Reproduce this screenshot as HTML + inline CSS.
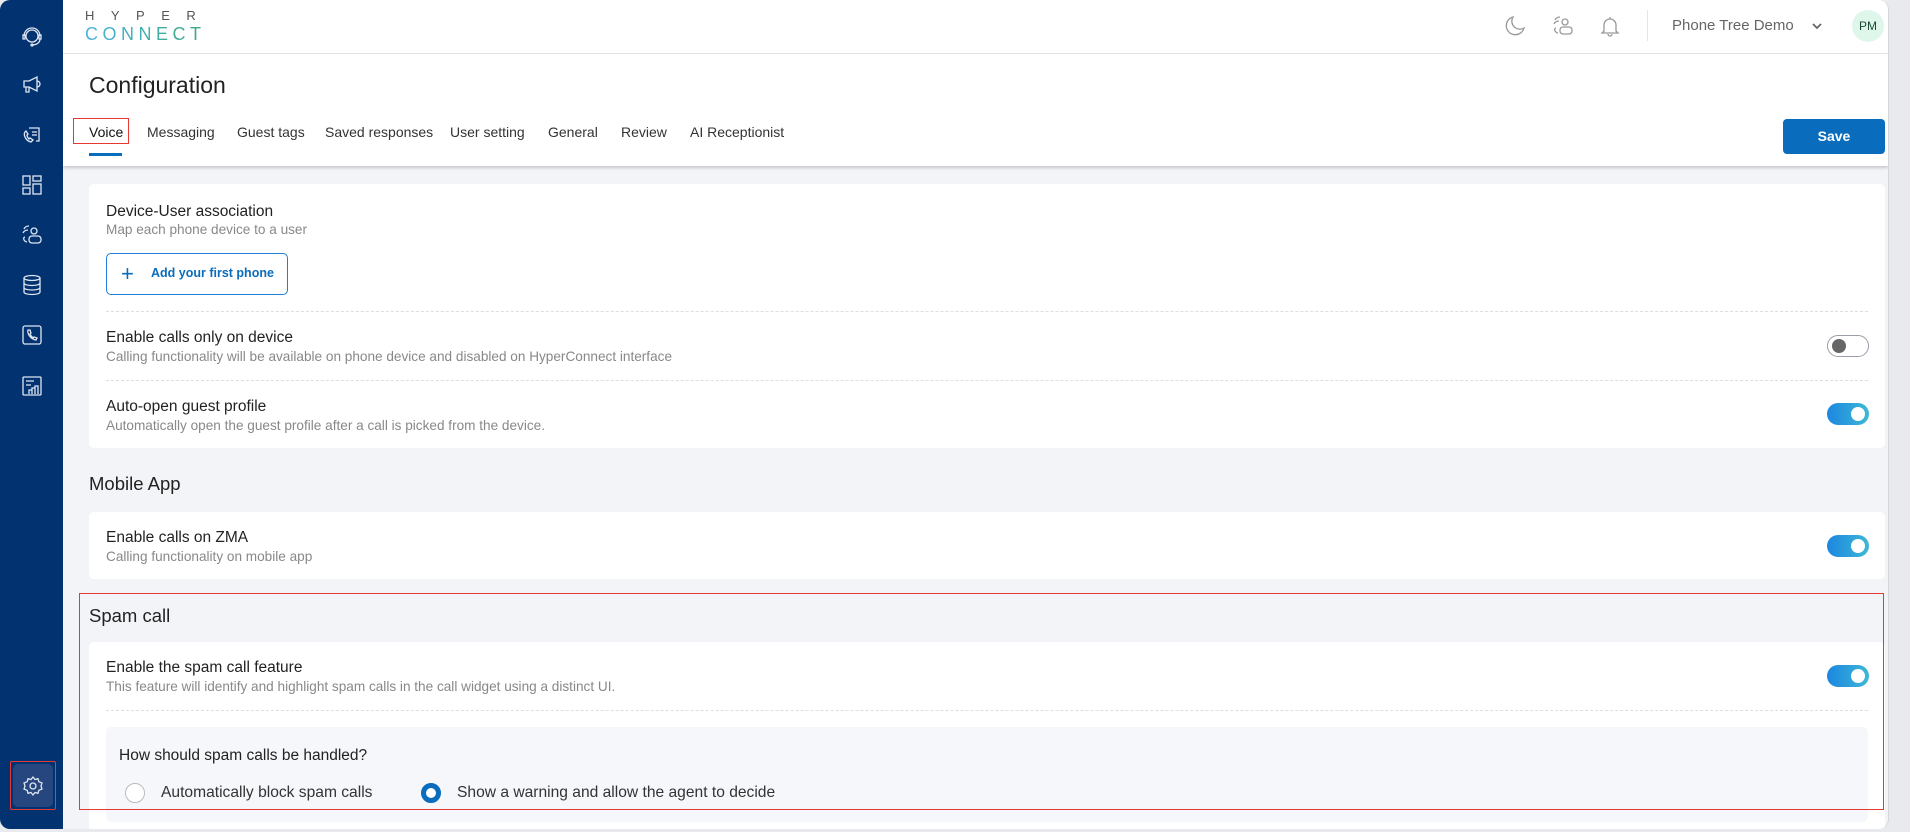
<!DOCTYPE html>
<html><head><meta charset="utf-8"><style>
*{box-sizing:border-box;margin:0;padding:0}
body{width:1910px;height:832px;overflow:hidden;background:#e9eaee;font-family:"Liberation Sans",sans-serif;position:relative}
.sb{position:absolute;left:0;top:0;width:63px;height:829px;background:#033270;border-radius:10px 0 0 10px}
.sb svg{position:absolute;left:20px;width:24px;height:24px;fill:none;stroke:#dfe6f2;stroke-width:1.3}
.page{position:absolute;left:63px;top:0;width:1826px;height:829px;background:#f3f4f8;border-right:1px solid #d4d6dc;border-radius:0 10px 10px 0;overflow:hidden}
.hdr{position:absolute;left:0;top:0;width:100%;height:54px;background:#fff;border-bottom:1px solid #e3e5ea}
.top{position:absolute;left:0;top:54px;width:100%;height:112px;background:#fff;box-shadow:0 2px 3px rgba(0,0,0,.18)}
.a{position:absolute;white-space:nowrap}
.card{position:absolute;left:26px;width:1796px;background:#fff;border-radius:5px}
.t{font-size:15.5px;color:#222}
.s{font-size:13.6px;color:#888}
.dash{position:absolute;left:17px;right:17px;border-top:1.5px dashed #dcdee3}
.tg{position:absolute;width:42px;height:22px;border-radius:11px;background:linear-gradient(90deg,#1c86e0,#3db9d5)}
.tg::after{content:"";position:absolute;right:4px;top:4px;width:14px;height:14px;border-radius:50%;background:#fff}
.off{background:#fff;border:1.5px solid #9a9ea8}
.off::after{left:4px;right:auto;top:3px;background:#666}
.tab{font-size:14px;color:#333;top:124px}
</style></head><body>
<div class="sb">
<svg style="top:25px" viewBox="0 0 24 24"><circle cx="12" cy="11" r="6"/><path d="M4 11a8 8 0 0116 0M3 10h2v4H3zM19 10h2v4h-2zM20 14c0 4-4 6-8 6"/><circle cx="12" cy="20" r="1"/><path d="M9.5 11h.1M12 11h.1M14.5 11h.1"/></svg>
<svg style="top:73px" viewBox="0 0 24 24"><path d="M4 8h5l8-4v14l-8-4H4zM6 14v5h3v-5M17 8a3 3 0 010 6"/></svg>
<svg style="top:123px" viewBox="0 0 24 24"><path d="M9 5h10v13h-3M12 9h5M12 12h5M5 9c-2 3 1 9 6 10l2-2-3-2-1 1c-1-1-2-2-2-4l1-1-2-3z"/></svg>
<svg style="top:173px" viewBox="0 0 24 24"><rect x="3" y="3" width="7" height="9"/><rect x="13" y="3" width="8" height="5"/><rect x="3" y="15" width="7" height="6"/><rect x="13" y="11" width="8" height="10"/></svg>
<svg style="top:223px" viewBox="0 0 24 24"><circle cx="14" cy="8" r="3"/><rect x="9" y="13" width="12" height="7" rx="3"/><path d="M4 6c1-2 3-3 5-3M3 10c1-2 3-3 5-3M5 14c-2 0-2 4 2 5"/></svg>
<svg style="top:273px" viewBox="0 0 24 24"><ellipse cx="12" cy="5" rx="8" ry="2.5"/><path d="M4 5v14c0 1.5 3.5 2.5 8 2.5s8-1 8-2.5V5M4 10c0 1.5 3.5 2.5 8 2.5s8-1 8-2.5M4 14.5c0 1.5 3.5 2.5 8 2.5s8-1 8-2.5"/></svg>
<svg style="top:323px" viewBox="0 0 24 24"><rect x="3" y="3" width="18" height="18" rx="2"/><path d="M8 7c-1 3 2 9 8 10l1-2-3-1-1 1c-1-1-2-2-3-4l1-1-1-3z"/></svg>
<svg style="top:374px" viewBox="0 0 24 24"><rect x="3" y="3" width="18" height="18" rx="1"/><path d="M6 7h8M6 11h5M9 20v-4h3v4M12 20v-6h3v6M15 20v-8h3v8"/></svg>
<div style="position:absolute;left:10px;top:761px;width:46px;height:49px;border:1.5px solid #e53935;border-radius:2px"><div style="position:absolute;left:2px;top:2px;right:2px;bottom:2px;background:#25467e;border-radius:5px"></div>
<svg style="top:12px;left:10px" viewBox="0 0 24 24"><circle cx="12" cy="12" r="3"/><path d="M12 3l2 2.5 3-.8.8 3L21 9l-1 3 1 3-3.2 1.3-.8 3-3-.8L12 21l-2-2.5-3 .8-.8-3L3 15l1-3-1-3 3.2-1.3.8-3 3 .8z"/></svg></div>
</div>
<div class="page">
<div class="hdr">
<div class="a" style="left:22px;top:8px;font-size:13px;letter-spacing:16.5px;color:#555">HYPER</div>
<div class="a" style="left:22px;top:24px;font-size:18px;letter-spacing:4.5px;background:linear-gradient(90deg,#4ab3e0,#3aa87a);-webkit-background-clip:text;color:transparent">CONNECT</div>
<svg class="a" style="left:1440px;top:14px" width="24" height="24" viewBox="0 0 24 24" fill="none" stroke="#999" stroke-width="1.3"><path d="M10 3a9 9 0 1011 11A8 8 0 0110 3z"/></svg>
<svg class="a" style="left:1488px;top:14px" width="24" height="24" viewBox="0 0 24 24" fill="none" stroke="#999" stroke-width="1.3"><circle cx="14" cy="8" r="3"/><rect x="9" y="13" width="12" height="7" rx="3"/><path d="M4 6c1-2 3-3 5-3M3 10c1-2 3-3 5-3M5 14c-2 0-2 4 2 5"/></svg>
<svg class="a" style="left:1535px;top:14px" width="24" height="24" viewBox="0 0 24 24" fill="none" stroke="#999" stroke-width="1.3"><path d="M6 17V11a6 6 0 0112 0v6l2 2H4zM10 20a2 2 0 004 0M12 3v2"/></svg>
<div class="a" style="left:1584px;top:10px;width:1px;height:31px;background:#e3e5ea"></div>
<div class="a" style="left:1609px;top:17px;font-size:15px;color:#666">Phone Tree Demo</div>
<svg class="a" style="left:1748px;top:20px" width="12" height="12" viewBox="0 0 12 12" fill="none" stroke="#666" stroke-width="1.8"><path d="M2 4l4 4 4-4"/></svg>
<div class="a" style="left:1789px;top:10px;width:32px;height:32px;border-radius:50%;background:#dff6ea;color:#1a4a33;font-size:12px;text-align:center;line-height:32px">PM</div>
</div>
<div class="top">
<div class="a" style="left:26px;top:18px;font-size:23px;color:#222">Configuration</div>
<div class="a" style="left:10px;top:64px;width:56px;height:26px;border:1.5px solid #e53935"></div>
<div class="a tab" style="left:26px;top:70px;color:#111">Voice</div>
<div class="a" style="left:26px;top:99px;width:33px;height:3px;background:#0a6cbd"></div>
<div class="a tab" style="left:84px;top:70px">Messaging</div>
<div class="a tab" style="left:174px;top:70px">Guest tags</div>
<div class="a tab" style="left:262px;top:70px">Saved responses</div>
<div class="a tab" style="left:387px;top:70px">User setting</div>
<div class="a tab" style="left:485px;top:70px">General</div>
<div class="a tab" style="left:558px;top:70px">Review</div>
<div class="a tab" style="left:627px;top:70px">AI Receptionist</div>
<div class="a" style="left:1720px;top:65px;width:102px;height:35px;background:#0a6cbd;border-radius:4px;color:#fff;font-weight:bold;font-size:14px;text-align:center;line-height:35px">Save</div>
</div>
<div class="card" style="top:184px;height:264px">
<div class="a t" style="left:17px;top:19px">Device-User association</div>
<div class="a s" style="left:17px;top:38px">Map each phone device to a user</div>
<div class="a" style="left:17px;top:69px;width:182px;height:42px;border:1.5px solid #1f7fd6;border-radius:5px;color:#0a6cbd;font-size:12.5px;font-weight:bold;line-height:39px;padding-left:44px">Add your first phone<span style="position:absolute;left:14px;top:0;font-size:22px;font-weight:normal">+</span></div>
<div class="dash" style="top:127px"></div>
<div class="a t" style="left:17px;top:145px">Enable calls only on device</div>
<div class="a s" style="left:17px;top:165px">Calling functionality will be available on phone device and disabled on HyperConnect interface</div>
<div class="tg off" style="left:1738px;top:151px"></div>
<div class="dash" style="top:196px"></div>
<div class="a t" style="left:17px;top:214px">Auto-open guest profile</div>
<div class="a s" style="left:17px;top:234px">Automatically open the guest profile after a call is picked from the device.</div>
<div class="tg" style="left:1738px;top:219px"></div>
</div>
<div class="a" style="left:26px;top:473px;font-size:18.5px;color:#222">Mobile App</div>
<div class="card" style="top:512px;height:67px">
<div class="a t" style="left:17px;top:17px">Enable calls on ZMA</div>
<div class="a s" style="left:17px;top:37px">Calling functionality on mobile app</div>
<div class="tg" style="left:1738px;top:23px"></div>
</div>
<div class="a" style="left:26px;top:605px;font-size:18.5px;color:#222">Spam call</div>
<div class="card" style="top:642px;height:190px">
<div class="a t" style="left:17px;top:17px">Enable the spam call feature</div>
<div class="a s" style="left:17px;top:37px">This feature will identify and highlight spam calls in the call widget using a distinct UI.</div>
<div class="tg" style="left:1738px;top:23px"></div>
<div class="dash" style="top:68px"></div>
<div class="a" style="left:17px;top:85px;width:1762px;height:95px;background:#f6f7fb;border-radius:5px">
<div class="a t" style="left:13px;top:20px">How should spam calls be handled?</div>
<div class="a" style="left:19px;top:56px;width:20px;height:20px;border-radius:50%;border:1.5px solid #bbb;background:#fff"></div>
<div class="a" style="left:55px;top:57px;font-size:15.6px;color:#333">Automatically block spam calls</div>
<div class="a" style="left:315px;top:56px;width:20px;height:20px;border-radius:50%;border:5.5px solid #0a6cbd;background:#fff"></div>
<div class="a" style="left:351px;top:57px;font-size:15.6px;color:#333">Show a warning and allow the agent to decide</div>
</div>
</div>
<div class="a" style="left:16px;top:593px;width:1805px;height:217px;border:1.5px solid #e53935"></div>
</div>
</body></html>
